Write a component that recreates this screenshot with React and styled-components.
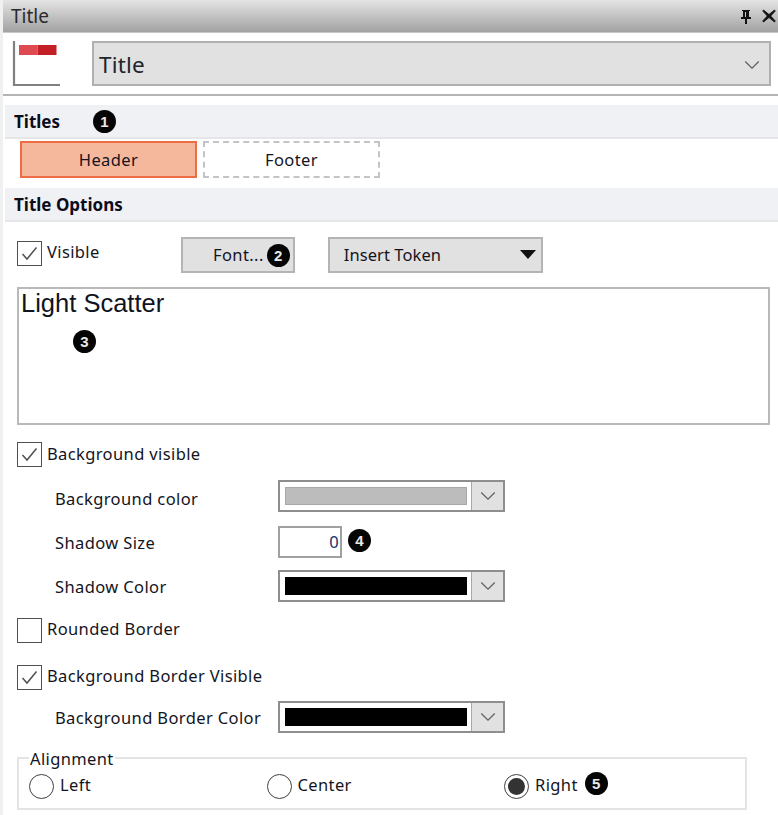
import React from "react";
import styled, { createGlobalStyle } from "styled-components";

const Global = createGlobalStyle`
  html, body { margin: 0; padding: 0; background: #fff; }
  * { box-sizing: border-box; }
  #root { width: 778px; height: 815px; overflow: hidden; }
`;

const Panel = styled.div`
  width: 778px;
  height: 815px;
  overflow: hidden;
  background: #fff;
  border-left: 3px solid #f0f0f0;
  font-family: "Noto Sans", "Open Sans", sans-serif;
  font-size: 16.5px;
  color: #14141e;
  letter-spacing: 0.38px;
`;

const TitleBar = styled.div`
  height: 33px;
  padding: 0 0 0 8px;
  display: flex;
  align-items: center;
  justify-content: space-between;
  background: linear-gradient(#e4e4e4, #a2a2a2);
  border-bottom: 1px solid #c8c8c8;
  font-size: 19px;
  letter-spacing: 0;
  color: #2a2a30;
`;

const WindowIcons = styled.div`
  display: flex;
  align-items: center;
  gap: 9px;
  padding-right: 2px;
`;

const Toolbar = styled.div`
  height: 63px;
  padding: 8px 7px 0 9px;
  display: flex;
  align-items: flex-start;
  border-bottom: 2px solid #b4b4b4;
`;

const ChartIcon = styled.svg`
  width: 50px;
  height: 46px;
  margin-right: 30px;
  flex: none;
`;

const Combo = styled.div`
  flex: 1;
  height: 45px;
  display: flex;
  align-items: center;
  justify-content: space-between;
  padding: 2px 9px 0 5px;
  background: #e1e1e1;
  border: 2px solid #b0b0b0;
  font-size: 22.5px;
  letter-spacing: 0.2px;
  color: #20242c;
`;

const Section = styled.div`
  margin: ${p => p.$top}px 0 0 2px;
  height: 34px;
  padding-left: 9px;
  display: flex;
  align-items: center;
  gap: 33px;
  background: #f0f1f5;
  border-bottom: 2px solid #e6e6e8;
  font-weight: 700;
  font-size: 17px;
  letter-spacing: 0;
  color: #0c0c1a;
`;

const Badge = styled.span`
  width: 23px;
  height: 23px;
  flex: none;
  display: inline-flex;
  align-items: center;
  justify-content: center;
  border-radius: 50%;
  background: #050505;
  color: #e8e8e8;
  font-family: "Liberation Sans", sans-serif;
  font-weight: 700;
  font-size: 15px;
  letter-spacing: 0;
  transform: translate(${p => p.$dx || 0}px, ${p => p.$dy || 0}px);
`;

const Tabs = styled.div`
  margin-top: 2px;
  padding-left: 17px;
  display: flex;
  gap: 6px;
`;

const Tab = styled.div`
  width: 177px;
  height: 37px;
  display: flex;
  align-items: center;
  justify-content: center;
  background: ${p => (p.$active ? "#f6b89c" : "#fff")};
  border: ${p => (p.$active ? "2px solid #ee6d45" : "2px dashed #c4c4c4")};
`;

const Body = styled.div`
  padding: 15px 0 0 14px;
`;

const TopRow = styled.div`
  height: 36px;
  display: flex;
  align-items: center;
`;

const CheckRow = styled.div`
  display: flex;
  align-items: center;
  gap: 5px;
  height: 25px;
  margin-top: ${p => p.$top || 0}px;
`;

const CheckLabel = styled.span`
  position: relative;
  top: ${p => p.$shift}px;
`;

const Box = styled.span`
  width: 25px;
  height: 25px;
  flex: none;
  display: flex;
  align-items: center;
  justify-content: center;
  background: #fff;
  border: 1.5px solid #505050;
`;

const GreyButton = styled.div`
  height: 36px;
  width: ${p => p.$width}px;
  margin-left: ${p => p.$left}px;
  display: flex;
  align-items: center;
  justify-content: ${p => p.$justify};
  gap: 3px;
  padding: ${p => p.$pad};
  background: #e1e1e1;
  border: 2px solid #b4b4b4;
  letter-spacing: ${p => p.$spacing};
`;

const TextBox = styled.div`
  position: relative;
  width: 753px;
  height: 138px;
  margin-top: 14px;
  padding: 0 2px;
  border: 2px solid #b9b9b9;
  font-family: "Liberation Sans", sans-serif;
  font-size: 25.5px;
  letter-spacing: 0;
  line-height: 29px;
  color: #10141e;
`;

const OverBadge = styled(Badge)`
  position: absolute;
  left: 54px;
  top: 41px;
`;

const FieldRow = styled.div`
  display: flex;
  align-items: center;
  height: 32px;
  margin-top: ${p => p.$top}px;
  padding-left: 38px;
`;

const FieldLabel = styled.span`
  width: 223px;
  flex: none;
  position: relative;
  top: ${p => p.$shift}px;
`;

const ColorCombo = styled.div`
  width: 227px;
  height: 32px;
  display: flex;
  border: 2px solid #8e8e8e;
  background: #fff;
`;

const Swatch = styled.div`
  flex: 1;
  margin: 5px 4px 5px 5px;
  background: ${p => p.$color};
  border: 1px solid ${p => (p.$color === "#000" ? "#000" : "#a8a8a8")};
`;

const ComboArrow = styled.div`
  width: 32px;
  flex: none;
  display: flex;
  align-items: center;
  justify-content: center;
  background: #e1e1e1;
  border-left: 1.5px solid #a8a8a8;
`;

const NumberBox = styled.div`
  width: 64px;
  height: 32px;
  margin-right: 6px;
  padding-right: 1px;
  text-align: right;
  line-height: 27px;
  border: 2px solid #a0a0a0;
  color: #14306a;
`;

const Group = styled.div`
  position: relative;
  width: 730px;
  height: 53px;
  margin-top: 24px;
  padding: 15px 0 0 10px;
  display: flex;
  border: 2px solid #e4e4e4;
`;

const Legend = styled.span`
  position: absolute;
  left: 10px;
  top: -10px;
  padding: 0 1px;
  background: #fff;
  line-height: 20px;
`;

const RadioItem = styled.div`
  width: 237.5px;
  height: 25px;
  display: flex;
  align-items: center;
  gap: 6px;
`;

const RadioLabel = styled.span`
  position: relative;
  top: -2px;
`;

const Radio = styled.span`
  width: 25px;
  height: 25px;
  flex: none;
  display: flex;
  align-items: center;
  justify-content: center;
  border: 1.5px solid #404040;
  border-radius: 50%;
  background: #fff;
  &::after {
    content: "";
    display: ${p => (p.$on ? "block" : "none")};
    width: 17px;
    height: 17px;
    border-radius: 50%;
    background: #333;
  }
`;

const Chevron = ({ size = 16 }) => (
  <svg width={size} height={size * 0.6} viewBox="0 0 16 10" fill="none">
    <path d="M1 1.5 8 8.5 15 1.5" stroke="#606060" strokeWidth="1.3" />
  </svg>
);

const Tick = () => (
  <svg width="17" height="15" viewBox="0 0 17 15" fill="none">
    <path d="M1.5 8 6 13 15.5 1.5" stroke="#505050" strokeWidth="1.5" />
  </svg>
);

const Check = ({ on, children, top, shift = -2 }) => (
  <CheckRow $top={top}>
    <Box>{on && <Tick />}</Box>
    <CheckLabel $shift={shift}>{children}</CheckLabel>
  </CheckRow>
);

const ColorField = ({ label, color, top, shift = 0 }) => (
  <FieldRow $top={top}>
    <FieldLabel $shift={shift}>{label}</FieldLabel>
    <ColorCombo>
      <Swatch $color={color} />
      <ComboArrow><Chevron /></ComboArrow>
    </ColorCombo>
  </FieldRow>
);

export default function App() {
  return (
    <Panel>
      <Global />
      <TitleBar>
        Title
        <WindowIcons>
          <svg width="14" height="15" viewBox="0 0 14 15">
            <path d="M3 1h8v1h-1v6h2v2H8v5H6v-5H2V8h2V2H3z M6 3v5h1V3z" fill="#111" fillRule="evenodd" />
          </svg>
          <svg width="14" height="14" viewBox="0 0 14 14">
            <path d="M1.5 1 7 5.5 12.5 1l.8 1L8.7 7l4.6 5-.8 1L7 8.5 1.5 13l-.8-1 4.6-5L.7 2z" fill="#111" stroke="#111" strokeWidth="0.8" />
          </svg>
        </WindowIcons>
      </TitleBar>
      <Toolbar>
        <ChartIcon viewBox="0 0 50 46">
          <rect x="7" y="4" width="18.5" height="10" fill="#dd4a52" />
          <rect x="25.5" y="4" width="19" height="10" fill="#c41e26" />
          <path d="M2 0V44H48" fill="none" stroke="#808080" strokeWidth="2.2" />
        </ChartIcon>
        <Combo>
          Title
          <Chevron />
        </Combo>
      </Toolbar>
      <Section $top={9}>
        Titles
        <Badge>1</Badge>
      </Section>
      <Tabs>
        <Tab $active>Header</Tab>
        <Tab>Footer</Tab>
      </Tabs>
      <Section $top={10}>Title Options</Section>
      <Body>
        <TopRow>
          <Check on top={-3} shift={-2.5}>Visible</Check>
          <GreyButton $width={114} $left={81} $justify="flex-end" $pad="0 3px 2px 0">
            Font...
            <Badge $dy={1}>2</Badge>
          </GreyButton>
          <GreyButton $width={215} $left={33} $spacing="0.08px" $justify="space-between" $pad="0 5px 2px 14px">
            Insert Token
            <svg width="16" height="9" viewBox="0 0 16 9">
              <path d="M0 0H16L8 9z" fill="#111" />
            </svg>
          </GreyButton>
        </TopRow>
        <TextBox>
          Light Scatter
          <OverBadge>3</OverBadge>
        </TextBox>
        <Check on top={17} shift={-1}>Background visible</Check>
        <ColorField label="Background color" color="#bcbcbc" top={13} shift={2} />
        <FieldRow $top={14}>
          <FieldLabel $shift={0}>Shadow Size</FieldLabel>
          <NumberBox>0</NumberBox>
          <Badge $dy={-2}>4</Badge>
        </FieldRow>
        <ColorField label="Shadow Color" color="#000" top={12} />
        <Check top={16}>Rounded Border</Check>
        <Check on top={22}>Background Border Visible</Check>
        <ColorField label="Background Border Color" color="#000" top={11} />
        <Group>
          <Legend>Alignment</Legend>
          <RadioItem><Radio /><RadioLabel>Left</RadioLabel></RadioItem>
          <RadioItem><Radio /><RadioLabel>Center</RadioLabel></RadioItem>
          <RadioItem>
            <Radio $on />
            <RadioLabel>Right</RadioLabel>
            <Badge $dx={1} $dy={-3}>5</Badge>
          </RadioItem>
        </Group>
      </Body>
    </Panel>
  );
}
